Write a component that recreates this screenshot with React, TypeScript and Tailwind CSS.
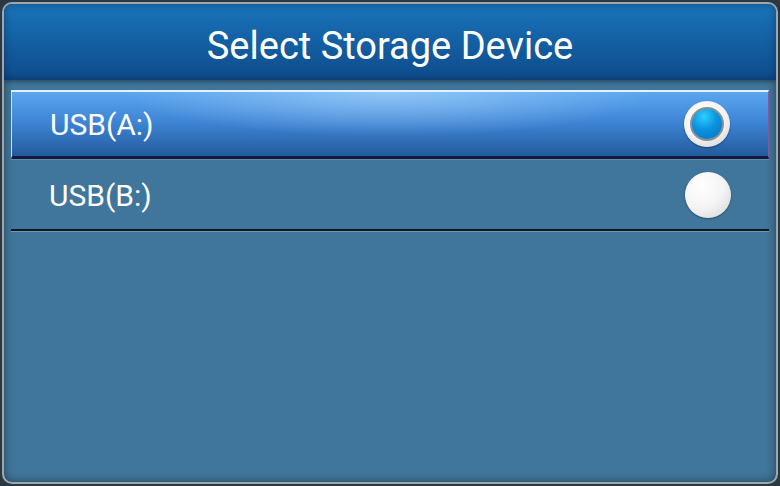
import React from 'react';

const devices = [
  { id: 'a', label: 'USB(A:)', selected: true },
  { id: 'b', label: 'USB(B:)', selected: false },
];

const Radio: React.FC<{ checked: boolean }> = ({ checked }) =>
  checked ? (
    <div className="w-[46px] h-[46px] rounded-full bg-[radial-gradient(circle_at_40%_30%,#ffffff_0%,#f2f2f2_55%,#cfcfcf_100%)] flex items-center justify-center shadow-[0_1px_2px_rgba(0,0,0,0.35)]">
      <div className="w-[34px] h-[34px] rounded-full border-[2px] border-[#8a8f94] bg-[radial-gradient(circle_at_40%_25%,#2ad0ff_0%,#0b93df_45%,#0872c2_100%)]" />
    </div>
  ) : (
    <div className="w-[46px] h-[46px] rounded-full bg-[radial-gradient(circle_at_35%_30%,#ffffff_0%,#f4f4f4_50%,#d2d2d2_100%)] shadow-[0_1px_2px_rgba(0,0,0,0.35)]" />
  );

export default function App() {
  return (
    <div className="w-[780px] h-[486px] bg-[#2a3843] p-[2px]" style={{ fontFamily: 'Roboto, "Liberation Sans", sans-serif' }}>
      <div className="h-full rounded-[10px] border-2 border-[#a3a6a8] overflow-hidden bg-[#40769b] flex flex-col shadow-[inset_0_0_10px_rgba(0,0,0,0.45)]">
        <div className="h-[76px] shrink-0 pt-[8px] bg-gradient-to-b from-[#1a74bb] to-[#0e4b8c] flex items-center justify-center shadow-[inset_0_0_8px_rgba(0,0,0,0.35),0_2px_4px_rgba(0,0,0,0.35)]">
          <h1 className="text-white text-[38px] leading-none">Select Storage Device</h1>
        </div>
        <div className="px-[7px] pt-[10px]">
          {devices.map((d) =>
            d.selected ? (
              <div
                key={d.id}
                className="relative h-[69px] flex items-center justify-between pl-[38px] pr-[38px] border-t-2 border-t-[#e6f1fb] border-l border-l-[#cfe3f7] border-r border-r-[#7a5fa0] border-b-[3px] border-b-[#15183f] bg-[linear-gradient(180deg,#5aa6f0_0%,#3f86d6_45%,#235a9e_100%)]"
              >
                <div className="absolute inset-0 bg-[radial-gradient(ellipse_35%_70%_at_50%_0%,rgba(190,225,255,0.55),rgba(190,225,255,0)_100%)]" />
                <span className="relative text-white text-[30px] leading-none pt-[2px]">{d.label}</span>
                <div className="relative">
                  <Radio checked />
                </div>
              </div>
            ) : (
              <div
                key={d.id}
                className="h-[72px] flex items-center justify-between pl-[38px] pr-[38px] border-t border-t-[#5f8fb0] border-b-2 border-b-[#0f141a] shadow-[0_1px_0_#6c99b8]"
              >
                <span className="text-white text-[30px] leading-none pt-[2px]">{d.label}</span>
                <Radio checked={false} />
              </div>
            )
          )}
        </div>
      </div>
    </div>
  );
}
